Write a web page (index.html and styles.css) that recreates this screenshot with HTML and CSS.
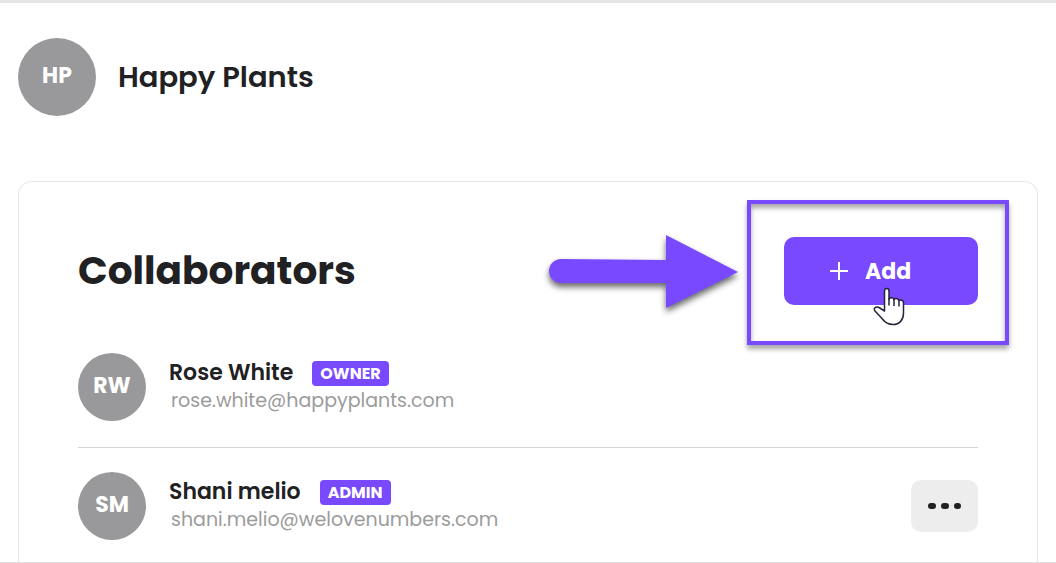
FILE: index.html
```
<!DOCTYPE html>
<html lang="en">

<head>
  <meta charset="utf-8">
  <meta name="viewport" content="width=device-width, initial-scale=1.0">
  <title>Happy Plants - Collaborators</title>
  <link rel="stylesheet" href="styles.css">
</head>

<body>
  <div class="page">
    <header class="company">
      <div class="avatar avatar-large">HP</div>
      <h1 class="company-name">Happy Plants</h1>
    </header>
    <main class="card">
      <div class="card-head">
        <h2 class="card-title">Collaborators</h2>
        <div class="add-wrap">
          <button type="button" class="add-button">
            <svg class="plus" viewBox="0 0 20 20" aria-hidden="true">
              <path d="M10 1v18M1 10h18" />
            </svg>
            Add
          </button>
          <div class="highlight"></div>
          <svg class="arrow" viewBox="0 0 190 74" aria-hidden="true">
            <path d="M13 24L118 25V0L190 37L118 73V48L13 48A12 12 0 0 1 13 24Z" />
          </svg>
          <svg class="cursor" viewBox="0 0 32 40" aria-hidden="true">
            <path d="M11.500 24V4C11.500 .5 16 .5 16 4V12C17.500 10 20.500 10.500 21 12.500C22.500 11 25.500 11.500 26 13.500C27.500 12.500 30.500 13 30.500 16V26C30.500 33 26.500 37.500 20 37.500C15 37.500 12 35.500 9.500 32L2 24C0 21 3 19 6 20.500Z" />
            <path d="M16 11V18.500M21 12.500V19M26 13.500V19.500" />
          </svg>
        </div>
      </div>
      <ul class="people">
        <li class="person">
          <div class="avatar">RW</div>
          <div class="info">
            <div class="name-line">
              <span class="name">Rose White</span>
              <span class="badge">OWNER</span>
            </div>
            <div class="email">rose.white@happyplants.com</div>
          </div>
        </li>
        <li class="person">
          <div class="avatar">SM</div>
          <div class="info">
            <div class="name-line">
              <span class="name">Shani melio</span>
              <span class="badge">ADMIN</span>
            </div>
            <div class="email">shani.melio@welovenumbers.com</div>
          </div>
          <button type="button" class="more-button" aria-label="More">
            <svg class="dots" viewBox="0 0 34 8" aria-hidden="true">
              <rect x="0" y="1" width="8" height="6" rx="3" />
              <rect x="13" y="1" width="8" height="6" rx="3" />
              <rect x="26" y="1" width="7" height="6" rx="3" />
            </svg>
          </button>
        </li>
      </ul>
    </main>
  </div>
</body>

</html>
```
FILE: styles.css
```
* {
  box-sizing: border-box;
}

body {
  margin: 0;
  background-color: #fff;
  color: #212124;
  font-family: Poppins, Inter, sans-serif;
}

.page {
  display: flex;
  flex-direction: column;
  height: 100vh;
  overflow: hidden;
  padding: 35px 18px 0;
  border-top: 3px solid #e5e5e5;
  border-bottom: 1px solid #dedede;
}

.company {
  display: flex;
  align-items: center;
  gap: 22px;
  margin-bottom: 65px;
}

.company-name {
  margin: 0;
  font-size: 29px;
  line-height: 40px;
  font-weight: 600;
}

.avatar {
  display: flex;
  justify-content: center;
  align-items: center;
  flex-shrink: 0;
  width: 68px;
  height: 68px;
  border-radius: 50%;
  background-color: #99999b;
  color: #fff;
  font-size: 22px;
  line-height: 28px;
  font-weight: 700;
  padding-bottom: 2px;
}

.avatar-large {
  width: 78px;
  height: 78px;
}

.card {
  flex: 1 0 auto;
  padding: 55px 59px 0;
  border: 1px solid #e6e6e6;
  border-bottom: 0;
  border-radius: 14px 14px 0 0;
}

.card-head {
  display: flex;
  justify-content: space-between;
  align-items: center;
  margin-bottom: 24px;
}

.card-title {
  margin: 0;
  font-size: 39px;
  line-height: 48px;
  font-weight: 700;
}

.add-wrap {
  position: relative;
}

.add-button {
  display: flex;
  align-items: center;
  gap: 16px;
  width: 194px;
  height: 68px;
  padding: 0 45px;
  border: 0;
  border-radius: 10px;
  background-color: #7849ff;
  color: #fff;
  font-family: inherit;
  font-size: 22px;
  font-weight: 700;
  cursor: pointer;
}

.plus {
  width: 20px;
  height: 20px;
  fill: none;
  stroke: #fff;
  stroke-width: 2;
}

/* callout drawn over the card */
.highlight {
  position: absolute;
  top: -37px;
  right: -31px;
  bottom: -40px;
  left: -37px;
  border: 4px solid #7849ff;
  box-shadow: 0 4px 5px rgba(0, 0, 0, 0.35), inset 0 4px 5px rgba(0, 0, 0, 0.35);
  pointer-events: none;
}

.arrow {
  position: absolute;
  top: -2px;
  right: 240px;
  width: 190px;
  height: 74px;
  overflow: visible;
  fill: #7849ff;
  filter: drop-shadow(0 4px 3px rgba(0, 0, 0, 0.6));
}

.cursor {
  position: absolute;
  top: 50px;
  left: 89px;
  width: 32px;
  height: 40px;
  fill: #fff;
  stroke: #24243a;
  stroke-width: 1.500;
  stroke-linejoin: round;
  pointer-events: none;
}

.people {
  margin: 0;
  padding: 0;
  list-style: none;
}

.person {
  display: flex;
  align-items: center;
  gap: 23px;
  padding: 24px 0 26px;
}

.person + .person {
  border-top: 1px solid #d6d6d6;
}

.info {
  flex: 1;
}

.name-line {
  display: flex;
  align-items: center;
  gap: 19px;
}

.name {
  font-size: 22px;
  line-height: 28px;
  font-weight: 600;
}

.badge {
  padding: 0 8px;
  border-radius: 4px;
  background-color: #7849ff;
  color: #fff;
  font-size: 16px;
  line-height: 25px;
  font-weight: 700;
}

.email {
  padding-left: 2px;
  color: #9b9b9b;
  font-size: 19px;
  line-height: 28px;
}

.more-button {
  display: flex;
  justify-content: center;
  align-items: center;
  width: 67px;
  height: 52px;
  padding: 0;
  border: 0;
  border-radius: 10px;
  background-color: #ededed;
  cursor: pointer;
}

.dots {
  width: 34px;
  height: 8px;
  fill: #212124;
}
```
